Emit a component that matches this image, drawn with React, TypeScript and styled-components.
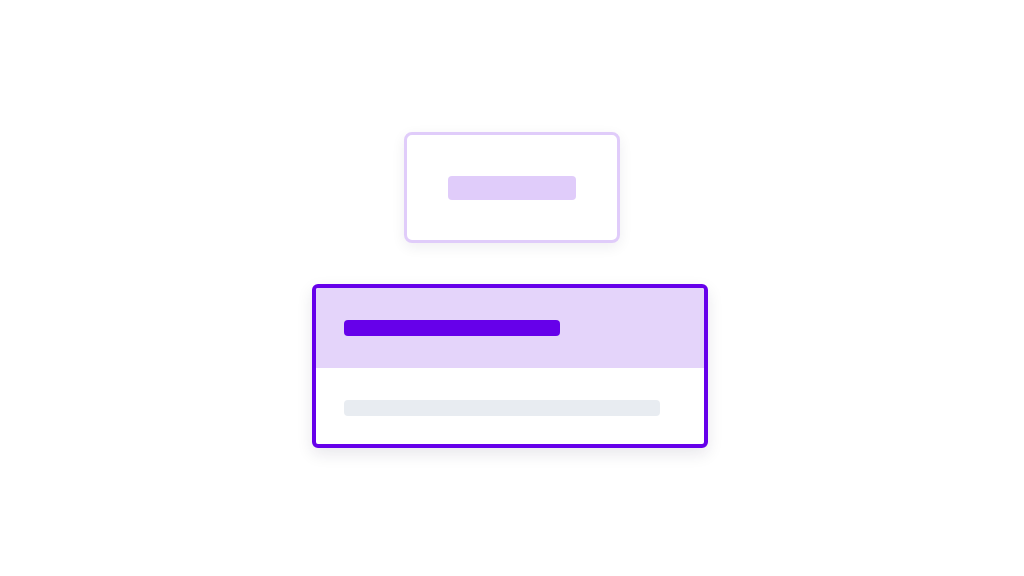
import styled, { createGlobalStyle } from 'styled-components';

const GlobalStyle = createGlobalStyle`
  html, body {
    margin: 0;
    padding: 0;
    background: #ffffff;
    font-family: 'Inter', 'Liberation Sans', sans-serif;
  }
`;

const Page = styled.div`
  width: 1024px;
  height: 576px;
  display: flex;
  flex-direction: column;
  align-items: center;
  justify-content: center;
  gap: 41px;
  padding-top: 4px;
  box-sizing: border-box;
`;

const Trigger = styled.div`
  box-sizing: border-box;
  width: 216px;
  height: 111px;
  border: 3px solid #e0ccfa;
  border-radius: 8px;
  background: #ffffff;
  display: flex;
  align-items: center;
  justify-content: center;
  box-shadow: 0 4px 14px rgba(30, 20, 60, 0.07);
`;

const Card = styled.div`
  box-sizing: border-box;
  width: 396px;
  border: 4px solid #6600ea;
  border-radius: 6px;
  background: #ffffff;
  overflow: hidden;
  box-shadow: 0 6px 16px rgba(30, 20, 60, 0.1);
  margin-right: 4px;
`;

const Header = styled.div`
  background: #e4d4fa;
  padding: 32px 28px;
`;

const Body = styled.div`
  padding: 32px 28px 28px;
`;

const Bar = styled.div<{ $w: number; $h: number; $color: string }>`
  width: ${(p) => p.$w}px;
  height: ${(p) => p.$h}px;
  border-radius: 4px;
  background: ${(p) => p.$color};
`;

export default function App() {
  return (
    <>
      <GlobalStyle />
      <Page>
        <Trigger>
          <Bar $w={128} $h={24} $color="#e0ccfa" />
        </Trigger>
        <Card>
          <Header>
            <Bar $w={216} $h={16} $color="#6600ea" />
          </Header>
          <Body>
            <Bar $w={316} $h={16} $color="#e8ecf1" />
          </Body>
        </Card>
      </Page>
    </>
  );
}
